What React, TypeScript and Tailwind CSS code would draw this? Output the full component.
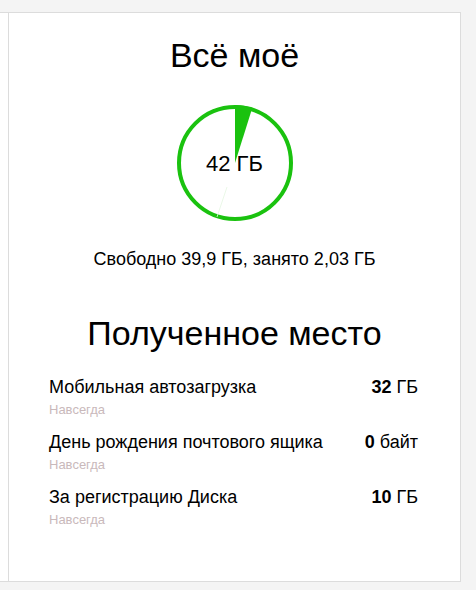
import React from "react";

const rows = [
  { title: "Мобильная автозагрузка", num: "32", unit: "ГБ" },
  { title: "День рождения почтового ящика", num: "0", unit: "байт" },
  { title: "За регистрацию Диска", num: "10", unit: "ГБ" },
];

function Chart() {
  return (
    <div className="relative w-[120px] h-[120px]">
      <svg width="120" height="120" viewBox="0 0 120 120" className="absolute inset-0">
        <circle cx="60" cy="60" r="56" fill="none" stroke="#1ac20f" strokeWidth="4" />
        <path d="M60 60 L60 2 A58 58 0 0 1 77.35 4.66 Z" fill="#1ac20f" />
        <line x1="52" y1="84" x2="42" y2="114" stroke="#e4f6e2" strokeWidth="0.8" />
      </svg>
      <div className="absolute inset-0 flex items-center justify-center text-[22px] text-black">
        <span>42 ГБ</span>
      </div>
    </div>
  );
}

export default function App() {
  return (
    <div
      className="w-[476px] h-[590px] bg-[#f4f4f4] pt-[12px]"
      style={{ fontFamily: '"Liberation Sans", Arial, sans-serif' }}
    >
      <div className="flex w-[461px] h-[570px] bg-white border-t border-b border-r border-[#dcdcdc]">
        <div className="w-[8px] shrink-0" />
        <div className="flex-1 border-l border-[#dcdcdc] flex flex-col">
          <div className="text-center text-[34px] leading-[40px] text-black mt-[22px]">Всё моё</div>
          <div className="flex justify-center mt-[28px]">
            <Chart />
          </div>
          <div className="text-center text-[18px] leading-[20px] text-black mt-[26px]">
            Свободно 39,9 ГБ, занято 2,03 ГБ
          </div>
          <div className="text-center text-[34px] leading-[40px] text-black mt-[44px]">Полученное место</div>
          <div className="flex flex-col pl-[40px] pr-[42px] mt-[24px]">
            {rows.map((r) => (
              <div key={r.title} className="flex flex-col h-[55px]">
                <div className="flex justify-between items-baseline text-[18px] leading-[20px] text-black">
                  <span>{r.title}</span>
                  <span>
                    <b className="font-bold">{r.num}</b> {r.unit}
                  </span>
                </div>
                <div className="text-[13px] leading-[16px] text-[#c9b9bb] mt-[5px]">Навсегда</div>
              </div>
            ))}
          </div>
        </div>
      </div>
    </div>
  );
}
